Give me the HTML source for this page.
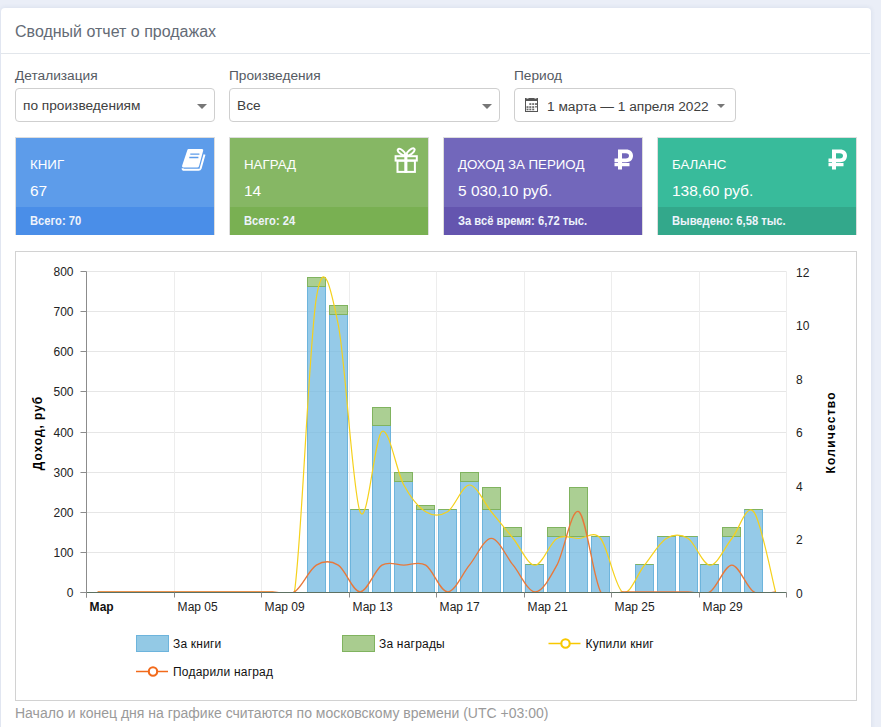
<!DOCTYPE html>
<html><head><meta charset="utf-8">
<style>
*{box-sizing:border-box;margin:0;padding:0}
html,body{width:881px;height:727px;overflow:hidden;background:#eaeef7;font-family:"Liberation Sans",sans-serif}
.card{position:absolute;left:1px;top:8px;width:870px;height:740px;background:#fff;border-radius:4px;box-shadow:0 0 5px rgba(50,70,120,0.11)}
.hdr{position:absolute;left:0;top:0;width:869px;height:46px;border-bottom:1px solid #e2e6eb}
.hdr span{position:absolute;left:14px;top:15px;font-size:16px;color:#646b76;white-space:nowrap}
.lbl{position:absolute;top:59.5px;font-size:13.7px;color:#555a62;white-space:nowrap}
.sel{position:absolute;top:80px;height:34px;border:1px solid #cfcfcf;border-radius:4px;background:#fff}
.sel span{position:absolute;left:7px;top:9px;font-size:13.7px;color:#404040;white-space:nowrap}
.caret{position:absolute;width:0;height:0;border-left:5px solid transparent;border-right:5px solid transparent;border-top:5px solid #777}
.st{position:absolute;top:129px;width:200px;height:98px;border:1px solid #ddd;color:#fff}
.st .t{position:absolute;left:14px;top:19px;font-size:13.3px;white-space:nowrap}
.st .v{position:absolute;left:14px;top:44px;font-size:15.5px;white-space:nowrap}
.st .f{position:absolute;left:0;top:69px;width:198px;height:28px}
.st .f span{position:absolute;left:14px;top:7px;font-size:12.3px;font-weight:bold;white-space:nowrap;color:#eef3fb;transform:scaleX(0.91);transform-origin:0 0}
.ic{position:absolute}
.tl{font-family:"Liberation Sans",sans-serif;font-size:12px;fill:#222}
.tlb{font-family:"Liberation Sans",sans-serif;font-size:12px;font-weight:bold;fill:#111}
.at{font-family:"Liberation Sans",sans-serif;font-size:12px;font-weight:bold;fill:#000;letter-spacing:0.95px}
.lg{font-family:"Liberation Sans",sans-serif;font-size:12px;fill:#111;letter-spacing:0.2px}
.foot{position:absolute;left:14px;top:697px;font-size:14px;color:#9a9a9a;white-space:nowrap}
</style></head><body>
<div class="card">
  <div class="hdr"><span>Сводный отчет о продажах</span></div>
  <div class="lbl" style="left:14px">Детализация</div>
  <div class="lbl" style="left:228px">Произведения</div>
  <div class="lbl" style="left:513px">Период</div>
  <div class="sel" style="left:14px;width:200px"><span>по произведениям</span><div class="caret" style="left:181px;top:15px"></div></div>
  <div class="sel" style="left:228px;width:271px"><span>Все</span><div class="caret" style="left:252px;top:15px"></div></div>
  <div class="sel" style="left:513px;width:222px"><svg style="position:absolute;left:10px;top:9px" width="13" height="14" viewBox="0 0 13 14"><rect x="0.5" y="0.5" width="12" height="13" fill="none" stroke="#555"/><rect x="0" y="0" width="13" height="3" fill="#555"/><rect x="1.5" y="0" width="2" height="1" fill="#bbb"/><rect x="9.5" y="0" width="2" height="1" fill="#bbb"/><g fill="#666"><rect x="4.3" y="5.2" width="2" height="1.7"/><rect x="7.2" y="5.2" width="2" height="1.7"/><rect x="10" y="5.2" width="2" height="1.7"/><rect x="1.5" y="8.2" width="2" height="1.7"/><rect x="4.3" y="8.2" width="2" height="1.7"/><rect x="7.2" y="8.2" width="2" height="1.7"/><rect x="10" y="8.2" width="2" height="1.2"/><rect x="1.5" y="10.6" width="2" height="1.7"/><rect x="4.3" y="10.6" width="2" height="1.7"/><rect x="7.2" y="10.6" width="2" height="1.7"/></g></svg><span style="left:32px;top:9.5px">1 марта — 1 апреля 2022</span><div class="caret" style="left:202px;top:15px;border-left-width:4px;border-right-width:4px;border-top-width:4px"></div></div>

  <div class="st" style="left:14px;background:#5d9cea"><div class="t">КНИГ</div><div class="v">67</div><svg class="ic" style="left:165px;top:10px" width="26" height="25" viewBox="0 0 26 25"><path d="M7.6,1 H21 Q22.6,1 22.2,2.6 L18,18.2 Q17.6,19.5 16.2,19.5 H2.4 Q0.6,19.5 1.1,17.8 L6.2,2.4 Q6.6,1 7.6,1 Z" fill="#fff"/><path d="M9.3,6.15 H18.4 M8.3,9.45 H17.4" stroke="#5d9cea" stroke-width="1.4"/><path d="M23.5,6.5 L19.6,20.5 Q19.1,21.8 17.6,21.8 H3.3 Q1.6,21.8 1.6,20.2" fill="none" stroke="#fff" stroke-width="2"/></svg><div class="f" style="background:#4a8ee8"><span>Всего: 70</span></div></div>
  <div class="st" style="left:228px;background:#86b764"><div class="t">НАГРАД</div><div class="v">14</div><svg class="ic" style="left:164px;top:9px" width="26" height="27" viewBox="0 0 26 27"><g fill="none" stroke="#fff" stroke-width="2"><ellipse cx="7.4" cy="5" rx="4.3" ry="2.0" transform="rotate(38 7.4 5)"/><ellipse cx="16.7" cy="4.8" rx="4.7" ry="2.1" transform="rotate(-40 16.7 4.8)"/><rect x="1.6" y="9.2" width="21.2" height="4.4"/><rect x="3.5" y="13.6" width="17.4" height="11.3"/></g><rect x="10.3" y="7.5" width="3.1" height="18.4" fill="#fff"/></svg><div class="f" style="background:#79b052"><span>Всего: 24</span></div></div>
  <div class="st" style="left:442px;background:#7267bb"><div class="t">ДОХОД ЗА ПЕРИОД</div><div class="v">5 030,10 руб.</div><svg class="ic" style="left:170px;top:11px" width="20" height="21" viewBox="0 0 20 21"><path d="M4,0.5 H12 C16.5,0.5 19,3 19,6.8 C19,10.5 16.5,13.3 12,13.3 H0.5 V9.5 H11.7 C14,9.5 15,8.3 15,6.8 C15,5.3 14,4.3 11.7,4.3 H8 V20.5 H4 Z M0.5,14 H15.5 V17.3 H0.5 Z" fill="#fff"/></svg><div class="f" style="background:#6455af"><span>За всё время: 6,72 тыс.</span></div></div>
  <div class="st" style="left:656px;background:#38bb9b"><div class="t">БАЛАНС</div><div class="v">138,60 руб.</div><svg class="ic" style="left:170px;top:11px" width="20" height="21" viewBox="0 0 20 21"><path d="M4,0.5 H12 C16.5,0.5 19,3 19,6.8 C19,10.5 16.5,13.3 12,13.3 H0.5 V9.5 H11.7 C14,9.5 15,8.3 15,6.8 C15,5.3 14,4.3 11.7,4.3 H8 V20.5 H4 Z M0.5,14 H15.5 V17.3 H0.5 Z" fill="#fff"/></svg><div class="f" style="background:#33a88b"><span>Выведено: 6,58 тыс.</span></div></div>

  <div class="foot">Начало и конец дня на графике считаются по московскому времени (UTC +03:00)</div>
</div>
<svg style="position:absolute;left:0;top:0" width="881" height="727">
<rect x="15.5" y="251.5" width="841" height="449" fill="none" stroke="#d2d2d2"/>
<line x1="86.5" y1="592.5" x2="786.5" y2="592.5" stroke="#e6e6e6"/>
<line x1="86.5" y1="552.5" x2="786.5" y2="552.5" stroke="#e6e6e6"/>
<line x1="86.5" y1="512.5" x2="786.5" y2="512.5" stroke="#e6e6e6"/>
<line x1="86.5" y1="472.5" x2="786.5" y2="472.5" stroke="#e6e6e6"/>
<line x1="86.5" y1="432.5" x2="786.5" y2="432.5" stroke="#e6e6e6"/>
<line x1="86.5" y1="391.5" x2="786.5" y2="391.5" stroke="#e6e6e6"/>
<line x1="86.5" y1="351.5" x2="786.5" y2="351.5" stroke="#e6e6e6"/>
<line x1="86.5" y1="311.5" x2="786.5" y2="311.5" stroke="#e6e6e6"/>
<line x1="86.5" y1="271.5" x2="786.5" y2="271.5" stroke="#e6e6e6"/>
<line x1="174.5" y1="271.5" x2="174.5" y2="592.5" stroke="#ededed"/>
<line x1="261.5" y1="271.5" x2="261.5" y2="592.5" stroke="#ededed"/>
<line x1="349.5" y1="271.5" x2="349.5" y2="592.5" stroke="#ededed"/>
<line x1="436.5" y1="271.5" x2="436.5" y2="592.5" stroke="#ededed"/>
<line x1="524.5" y1="271.5" x2="524.5" y2="592.5" stroke="#ededed"/>
<line x1="611.5" y1="271.5" x2="611.5" y2="592.5" stroke="#ededed"/>
<line x1="699.5" y1="271.5" x2="699.5" y2="592.5" stroke="#ededed"/>
<line x1="786.5" y1="271.5" x2="786.5" y2="592.5" stroke="#ededed"/>
<line x1="88.5" y1="592.5" x2="106.5" y2="592.5" stroke="#80b35f"/>
<line x1="110.5" y1="592.5" x2="128.5" y2="592.5" stroke="#80b35f"/>
<line x1="132.5" y1="592.5" x2="150.5" y2="592.5" stroke="#80b35f"/>
<line x1="154.5" y1="592.5" x2="172.5" y2="592.5" stroke="#80b35f"/>
<line x1="175.5" y1="592.5" x2="193.5" y2="592.5" stroke="#80b35f"/>
<line x1="197.5" y1="592.5" x2="215.5" y2="592.5" stroke="#80b35f"/>
<line x1="219.5" y1="592.5" x2="237.5" y2="592.5" stroke="#80b35f"/>
<line x1="241.5" y1="592.5" x2="259.5" y2="592.5" stroke="#80b35f"/>
<line x1="263.5" y1="592.5" x2="281.5" y2="592.5" stroke="#80b35f"/>
<line x1="285.5" y1="592.5" x2="303.5" y2="592.5" stroke="#80b35f"/>
<rect x="307.5" y="286.5" width="18" height="306.0" fill="rgba(112,184,224,0.74)" stroke="#6db4dc"/>
<rect x="307.5" y="277.5" width="18" height="9.0" fill="rgba(138,188,106,0.72)" stroke="#80b35f"/>
<rect x="329.5" y="314.5" width="18" height="278.0" fill="rgba(112,184,224,0.74)" stroke="#6db4dc"/>
<rect x="329.5" y="305.5" width="18" height="9.0" fill="rgba(138,188,106,0.72)" stroke="#80b35f"/>
<rect x="350.5" y="509.5" width="18" height="83.0" fill="rgba(112,184,224,0.74)" stroke="#6db4dc"/>
<line x1="350.5" y1="509.5" x2="368.5" y2="509.5" stroke="#80b35f"/>
<rect x="372.5" y="425.5" width="18" height="167.0" fill="rgba(112,184,224,0.74)" stroke="#6db4dc"/>
<rect x="372.5" y="407.5" width="18" height="18.0" fill="rgba(138,188,106,0.72)" stroke="#80b35f"/>
<rect x="394.5" y="481.5" width="18" height="111.0" fill="rgba(112,184,224,0.74)" stroke="#6db4dc"/>
<rect x="394.5" y="472.5" width="18" height="9.0" fill="rgba(138,188,106,0.72)" stroke="#80b35f"/>
<rect x="416.5" y="509.5" width="18" height="83.0" fill="rgba(112,184,224,0.74)" stroke="#6db4dc"/>
<rect x="416.5" y="505.5" width="18" height="4.0" fill="rgba(138,188,106,0.72)" stroke="#80b35f"/>
<rect x="438.5" y="509.5" width="18" height="83.0" fill="rgba(112,184,224,0.74)" stroke="#6db4dc"/>
<line x1="438.5" y1="509.5" x2="456.5" y2="509.5" stroke="#80b35f"/>
<rect x="460.5" y="481.5" width="18" height="111.0" fill="rgba(112,184,224,0.74)" stroke="#6db4dc"/>
<rect x="460.5" y="472.5" width="18" height="9.0" fill="rgba(138,188,106,0.72)" stroke="#80b35f"/>
<rect x="482.5" y="509.5" width="18" height="83.0" fill="rgba(112,184,224,0.74)" stroke="#6db4dc"/>
<rect x="482.5" y="487.5" width="18" height="22.0" fill="rgba(138,188,106,0.72)" stroke="#80b35f"/>
<rect x="503.5" y="536.5" width="18" height="56.0" fill="rgba(112,184,224,0.74)" stroke="#6db4dc"/>
<rect x="503.5" y="527.5" width="18" height="9.0" fill="rgba(138,188,106,0.72)" stroke="#80b35f"/>
<rect x="525.5" y="564.5" width="18" height="28.0" fill="rgba(112,184,224,0.74)" stroke="#6db4dc"/>
<line x1="525.5" y1="564.5" x2="543.5" y2="564.5" stroke="#80b35f"/>
<rect x="547.5" y="536.5" width="18" height="56.0" fill="rgba(112,184,224,0.74)" stroke="#6db4dc"/>
<rect x="547.5" y="527.5" width="18" height="9.0" fill="rgba(138,188,106,0.72)" stroke="#80b35f"/>
<rect x="569.5" y="536.5" width="18" height="56.0" fill="rgba(112,184,224,0.74)" stroke="#6db4dc"/>
<rect x="569.5" y="487.5" width="18" height="49.0" fill="rgba(138,188,106,0.72)" stroke="#80b35f"/>
<rect x="591.5" y="536.5" width="18" height="56.0" fill="rgba(112,184,224,0.74)" stroke="#6db4dc"/>
<line x1="591.5" y1="536.5" x2="609.5" y2="536.5" stroke="#80b35f"/>
<line x1="613.5" y1="592.5" x2="631.5" y2="592.5" stroke="#80b35f"/>
<rect x="635.5" y="564.5" width="18" height="28.0" fill="rgba(112,184,224,0.74)" stroke="#6db4dc"/>
<line x1="635.5" y1="564.5" x2="653.5" y2="564.5" stroke="#80b35f"/>
<rect x="657.5" y="536.5" width="18" height="56.0" fill="rgba(112,184,224,0.74)" stroke="#6db4dc"/>
<line x1="657.5" y1="536.5" x2="675.5" y2="536.5" stroke="#80b35f"/>
<rect x="679.5" y="536.5" width="18" height="56.0" fill="rgba(112,184,224,0.74)" stroke="#6db4dc"/>
<line x1="679.5" y1="536.5" x2="697.5" y2="536.5" stroke="#80b35f"/>
<rect x="700.5" y="564.5" width="18" height="28.0" fill="rgba(112,184,224,0.74)" stroke="#6db4dc"/>
<line x1="700.5" y1="564.5" x2="718.5" y2="564.5" stroke="#80b35f"/>
<rect x="722.5" y="536.5" width="18" height="56.0" fill="rgba(112,184,224,0.74)" stroke="#6db4dc"/>
<rect x="722.5" y="527.5" width="18" height="9.0" fill="rgba(138,188,106,0.72)" stroke="#80b35f"/>
<rect x="744.5" y="509.5" width="18" height="83.0" fill="rgba(112,184,224,0.74)" stroke="#6db4dc"/>
<line x1="744.5" y1="509.5" x2="762.5" y2="509.5" stroke="#80b35f"/>
<line x1="766.5" y1="592.5" x2="784.5" y2="592.5" stroke="#80b35f"/>
<line x1="86.5" y1="592.5" x2="786.5" y2="592.5" stroke="#5d7163"/>
<line x1="86.5" y1="271.5" x2="86.5" y2="597.5" stroke="#8c8c8c"/>
<line x1="80.5" y1="592.5" x2="86.5" y2="592.5" stroke="#8c8c8c"/>
<line x1="80.5" y1="592.5" x2="86.5" y2="592.5" stroke="#8c8c8c"/>
<text x="73.5" y="596.8" text-anchor="end" class="tl">0</text>
<line x1="80.5" y1="552.5" x2="86.5" y2="552.5" stroke="#8c8c8c"/>
<text x="73.5" y="556.8" text-anchor="end" class="tl">100</text>
<line x1="80.5" y1="512.5" x2="86.5" y2="512.5" stroke="#8c8c8c"/>
<text x="73.5" y="516.8" text-anchor="end" class="tl">200</text>
<line x1="80.5" y1="472.5" x2="86.5" y2="472.5" stroke="#8c8c8c"/>
<text x="73.5" y="476.8" text-anchor="end" class="tl">300</text>
<line x1="80.5" y1="432.5" x2="86.5" y2="432.5" stroke="#8c8c8c"/>
<text x="73.5" y="436.8" text-anchor="end" class="tl">400</text>
<line x1="80.5" y1="391.5" x2="86.5" y2="391.5" stroke="#8c8c8c"/>
<text x="73.5" y="395.8" text-anchor="end" class="tl">500</text>
<line x1="80.5" y1="351.5" x2="86.5" y2="351.5" stroke="#8c8c8c"/>
<text x="73.5" y="355.8" text-anchor="end" class="tl">600</text>
<line x1="80.5" y1="311.5" x2="86.5" y2="311.5" stroke="#8c8c8c"/>
<text x="73.5" y="315.8" text-anchor="end" class="tl">700</text>
<line x1="80.5" y1="271.5" x2="86.5" y2="271.5" stroke="#8c8c8c"/>
<text x="73.5" y="275.8" text-anchor="end" class="tl">800</text>
<text x="796" y="597.5" class="tl">0</text>
<text x="796" y="544.0" class="tl">2</text>
<text x="796" y="490.5" class="tl">4</text>
<text x="796" y="437.0" class="tl">6</text>
<text x="796" y="383.5" class="tl">8</text>
<text x="796" y="330.0" class="tl">10</text>
<text x="796" y="276.5" class="tl">12</text>
<line x1="86.5" y1="592.5" x2="86.5" y2="597.5" stroke="#8c8c8c"/>
<text x="89.5" y="611" class="tlb">Мар</text>
<line x1="174.5" y1="592.5" x2="174.5" y2="597.5" stroke="#8c8c8c"/>
<text x="177.5" y="611" class="tl">Мар 05</text>
<line x1="261.5" y1="592.5" x2="261.5" y2="597.5" stroke="#8c8c8c"/>
<text x="264.5" y="611" class="tl">Мар 09</text>
<line x1="349.5" y1="592.5" x2="349.5" y2="597.5" stroke="#8c8c8c"/>
<text x="352.5" y="611" class="tl">Мар 13</text>
<line x1="436.5" y1="592.5" x2="436.5" y2="597.5" stroke="#8c8c8c"/>
<text x="439.5" y="611" class="tl">Мар 17</text>
<line x1="524.5" y1="592.5" x2="524.5" y2="597.5" stroke="#8c8c8c"/>
<text x="527.5" y="611" class="tl">Мар 21</text>
<line x1="611.5" y1="592.5" x2="611.5" y2="597.5" stroke="#8c8c8c"/>
<text x="614.5" y="611" class="tl">Мар 25</text>
<line x1="699.5" y1="592.5" x2="699.5" y2="597.5" stroke="#8c8c8c"/>
<text x="702.5" y="611" class="tl">Мар 29</text>
<line x1="786.5" y1="592.5" x2="786.5" y2="597.5" stroke="#8c8c8c"/>
<clipPath id="pc"><rect x="86.5" y="261.5" width="700.0" height="330.5"/></clipPath>
<g clip-path="url(#pc)"><path d="M97.64,592.00 C101.28,592.00 112.22,592.00 119.50,592.00 C126.79,592.00 134.09,592.00 141.38,592.00 C148.66,592.00 155.96,592.00 163.25,592.00 C170.53,592.00 177.83,592.00 185.12,592.00 C192.41,592.00 199.70,592.00 206.99,592.00 C214.28,592.00 221.57,592.00 228.86,592.00 C236.15,592.00 243.44,592.00 250.73,592.00 C258.02,592.00 265.31,592.00 272.60,592.00 C279.89,592.00 287.18,641.04 294.47,592.00 C301.76,542.96 309.05,342.33 316.34,297.75 C323.63,253.17 330.92,288.83 338.21,324.50 C345.50,360.17 352.78,493.92 360.07,511.75 C367.37,529.58 374.65,435.96 381.94,431.50 C389.24,427.04 396.52,471.62 403.81,485.00 C411.11,498.38 418.39,507.29 425.69,511.75 C432.98,516.21 440.26,516.21 447.56,511.75 C454.85,507.29 462.13,485.00 469.43,485.00 C476.72,485.00 484.00,502.83 491.30,511.75 C498.59,520.67 505.88,529.58 513.17,538.50 C520.46,547.42 527.75,565.25 535.04,565.25 C542.33,565.25 549.62,542.96 556.91,538.50 C564.20,534.04 571.49,538.50 578.78,538.50 C586.07,538.50 593.36,529.58 600.65,538.50 C607.94,547.42 615.23,587.54 622.52,592.00 C629.81,596.46 637.10,574.17 644.39,565.25 C651.68,556.33 658.97,542.96 666.26,538.50 C673.55,534.04 680.84,534.04 688.13,538.50 C695.42,542.96 702.71,565.25 710.00,565.25 C717.29,565.25 724.58,547.42 731.87,538.50 C739.16,529.58 746.45,502.83 753.74,511.75 C761.03,520.67 771.96,578.62 775.61,592.00" fill="none" stroke="#f5d11c" stroke-width="1.2"/>
<path d="M97.64,591.90 C101.28,591.90 112.22,591.90 119.50,591.90 C126.79,591.90 134.09,591.90 141.38,591.90 C148.66,591.90 155.96,591.90 163.25,591.90 C170.53,591.90 177.83,591.90 185.12,591.90 C192.41,591.90 199.70,591.90 206.99,591.90 C214.28,591.90 221.57,591.90 228.86,591.90 C236.15,591.90 243.44,591.90 250.73,591.90 C258.02,591.90 265.31,591.90 272.60,591.90 C279.89,591.90 287.18,596.36 294.47,591.90 C301.76,587.44 309.05,569.61 316.34,565.15 C323.63,560.69 330.92,560.69 338.21,565.15 C345.50,569.61 352.78,591.90 360.07,591.90 C367.37,591.90 374.65,569.61 381.94,565.15 C389.24,560.69 396.52,565.15 403.81,565.15 C411.11,565.15 418.39,560.69 425.69,565.15 C432.98,569.61 440.26,591.90 447.56,591.90 C454.85,591.90 462.13,574.07 469.43,565.15 C476.72,556.23 484.00,538.40 491.30,538.40 C498.59,538.40 505.88,556.23 513.17,565.15 C520.46,574.07 527.75,591.90 535.04,591.90 C542.33,591.90 549.62,578.52 556.91,565.15 C564.20,551.77 571.49,507.19 578.78,511.65 C586.07,516.11 593.36,578.52 600.65,591.90 C607.94,605.27 615.23,591.90 622.52,591.90 C629.81,591.90 637.10,591.90 644.39,591.90 C651.68,591.90 658.97,591.90 666.26,591.90 C673.55,591.90 680.84,591.90 688.13,591.90 C695.42,591.90 702.71,596.36 710.00,591.90 C717.29,587.44 724.58,565.15 731.87,565.15 C739.16,565.15 746.45,587.44 753.74,591.90 C761.03,596.36 771.96,591.90 775.61,591.90" fill="none" stroke="#e8783a" stroke-width="1.35"/></g>
<text transform="translate(42,433) rotate(-90)" text-anchor="middle" class="at">Доход, руб</text>
<text transform="translate(834.5,432.3) rotate(-90)" text-anchor="middle" class="at" style="letter-spacing:1.25px">Количество</text>
<rect x="136.5" y="635.5" width="32" height="16" fill="#93c9e5" stroke="#6db4dc"/><text x="173" y="648" class="lg">За книги</text>
<rect x="342.5" y="635.5" width="32" height="16" fill="#a9cc8f" stroke="#80b35f"/><text x="379" y="648" class="lg">За награды</text>
<line x1="548.5" y1="643.5" x2="580.5" y2="643.5" stroke="#f8c800" stroke-width="1.5"/><circle cx="565.5" cy="643.5" r="4.2" fill="#fff" stroke="#f8c800" stroke-width="2.1"/><text x="585.5" y="648.2" class="lg">Купили книг</text>
<line x1="136" y1="671.5" x2="168" y2="671.5" stroke="#f26a1b" stroke-width="1.5"/><circle cx="153" cy="671.5" r="4.2" fill="#fff" stroke="#f26a1b" stroke-width="2.1"/><text x="173" y="676.2" class="lg">Подарили наград</text>
</svg>
</body></html>
